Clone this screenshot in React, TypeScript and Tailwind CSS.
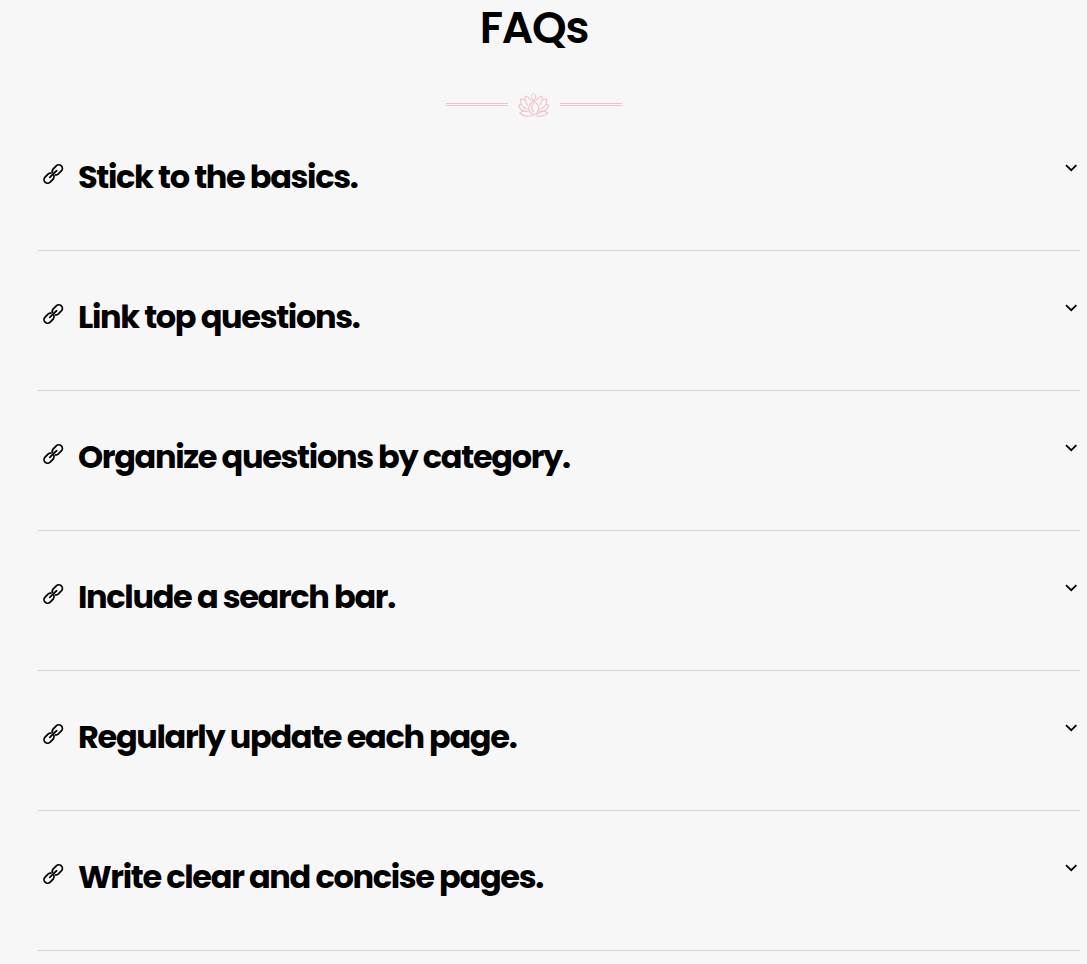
const items = [
  "Stick to the basics.",
  "Link top questions.",
  "Organize questions by category.",
  "Include a search bar.",
  "Regularly update each page.",
  "Write clear and concise pages.",
];

function LinkIcon() {
  return (
    <svg className="mt-3 ml-[5px] h-[22px] w-[21px] shrink-0" viewBox="0 0 21 22" fill="none" stroke="#000" strokeWidth="1.75" strokeLinecap="round">
      <g transform="translate(10.2 11) rotate(-45)">
        <path d="M-1 -2.2A3.6 3.6 0 0 0 -3.4 -3.6H-7.9A3.6 3.6 0 0 0 -7.9 3.6H-3.4A3.6 3.6 0 0 0 -.6 1.6" />
        <path d="M1 2.2A3.6 3.6 0 0 0 3.4 3.6H7.9A3.6 3.6 0 0 0 7.9 -3.6H3.4A3.6 3.6 0 0 0 .6 -1.6" />
        <path d="M-4.8 0H4.8" />
      </g>
    </svg>
  );
}

function Lotus() {
  return (
    <svg className="h-6 w-8 shrink-0" viewBox="0 0 32 24" fill="none" stroke="#efc3ca" strokeWidth="1.15" strokeLinejoin="round" strokeLinecap="round">
      <ellipse cx="15.6" cy="3.7" rx="2.1" ry="3" strokeWidth=".8" />
      <path d="M14 7C18.5 9.5 21.5 12.5 20.6 16.5C19.5 21 15 23.4 10 23.2C6 23 3.5 21.8 1.8 20L5.2 18" />
      <path d="M17.3 7C13 9.5 10 12.5 10.9 16.5C11.5 19 13 20.8 15 21.8M18 23C22.5 23.8 28 22.6 29.8 20L26.3 18C23.5 18.2 21 19.5 19 21.2" />
      <path d="M15.8 10.4C13 12.4 12.8 16 15.5 19" />
      <path d="M9.4 12C6.8 8.5 6.5 5.4 7.5 3C10 3.8 11.8 5.2 12.7 7.2M21.8 12C24.4 8.5 24.7 5.4 23.7 3C21.2 3.8 19.4 5.2 18.5 7.2" />
      <path d="M6.5 6.7L2.5 6.1C2 10.5 4.5 14.2 9 16.2M24.7 6.7L28.7 6.1C29.2 10.5 26.7 14.2 22.2 16.2" />
      <path d="M2.8 11.4L.7 12.2C1.5 16.5 5 18.8 10 18.2M28.4 11.4L30.6 12.2C29.8 16.5 26.2 18.8 21.2 18.2" />
    </svg>
  );
}

function Chevron() {
  return (
    <svg className="mt-[13px] mr-[3px] h-2 w-3 shrink-0" viewBox="0 0 12 8" fill="none" stroke="#000" strokeWidth="1.8">
      <path d="M1 1.2L6.2 6.2L11.4 1.2" />
    </svg>
  );
}

export default function App() {
  return (
    <main className="h-[964px] w-[1087px] overflow-hidden bg-[#f7f7f7] pr-[7px] pl-[38px] font-['Poppins','Inter',sans-serif] text-black">
      <header className="flex h-[151px] w-[992px] flex-col items-center">
        <h1 className="h-[57px] text-[44px] leading-[56px] font-semibold tracking-[-1.2px] whitespace-nowrap">FAQs</h1>
        <div className="mt-9 flex items-center gap-[10px]">
          <div className="mb-px w-[62px] border-t-3 border-double border-[#efc3ca]" />
          <Lotus />
          <div className="mb-px w-[62px] border-t-3 border-double border-[#efc3ca]" />
        </div>
      </header>
      <section>
        {items.map((title) => (
          <article key={title} className="mb-10 flex h-[100px] items-start border-b border-[#d5d5d5]">
            <LinkIcon />
            <h2 className="ml-[14px] flex-1 text-[32px] leading-[52px] font-bold tracking-[-1.34px] whitespace-nowrap">{title}</h2>
            <Chevron />
          </article>
        ))}
      </section>
    </main>
  );
}
